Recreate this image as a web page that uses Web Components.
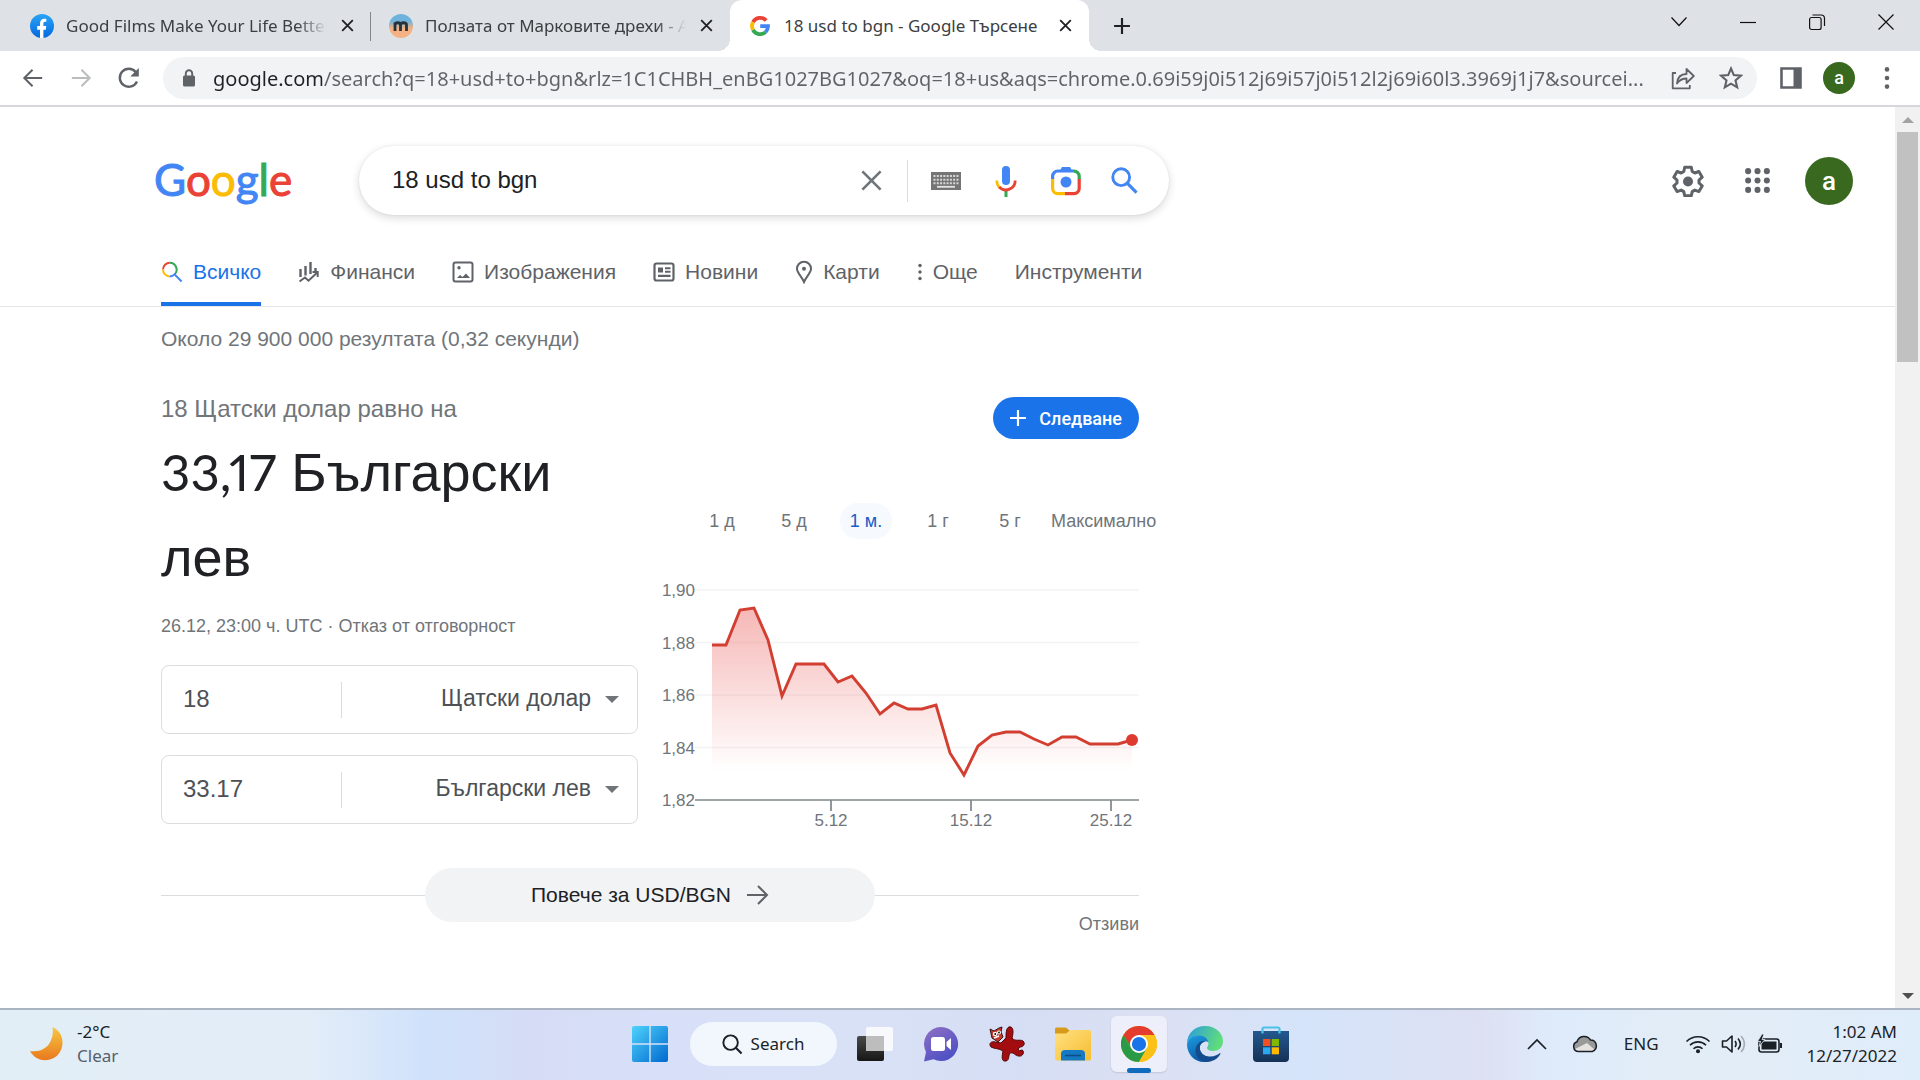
<!DOCTYPE html>
<html lang="bg">
<head>
<meta charset="utf-8">
<title>18 usd to bgn - Google Търсене</title>
<style>
  html, body { margin: 0; height: 100%; background: #fff; }
  body { font-family: "Liberation Sans", Arial, sans-serif; color: #202124; --ui: "Noto Sans", "Open Sans", sans-serif; overflow: hidden; }
</style>
</head>
<body>
<desktop-screen></desktop-screen>
<script>
const ICONS = {
  facebook: ['0 0 24 24', '<defs><linearGradient id="g" x2="0" y2="1"><stop stop-color="#2aa4f4"/><stop offset="1" stop-color="#0568e0"/></linearGradient></defs><circle cx="12" cy="12" r="12" fill="url(#g)"/><path d="M10 24v-8.300H7.200V12H10V9.500c0-3.100 1.700-4.700 4.300-4.700.9 0 2 .2 2 .2v2.700h-1.200c-1.300 0-1.700.8-1.700 1.700V12h2.900l-.5 3.700h-2.400V24z" fill="#fff"/>'],
  medic: ['0 0 24 24', '<defs><linearGradient id="g" x2="0" y2="1"><stop offset=".3" stop-color="#6fb3dc"/><stop offset=".6" stop-color="#f4b183"/></linearGradient></defs><circle cx="12" cy="12" r="12" fill="url(#g)"/><path d="M6 17V8.500M6 11c0-3 5.500-3 5.500 0v6M11.500 11c0-3 6-3 6 0v6" fill="none" stroke="#26333c" stroke-width="2.800"/>'],
  gmark: ['0 0 24 24', '<g fill="none" stroke-width="3.800"><path d="M18.200 6.600A8 8 0 0 0 5 8.200" stroke="#ea4335"/><path d="M5 8.200a8 8 0 0 0 0 7.600" stroke="#fbbc05"/><path d="M5 15.800a8 8 0 0 0 12.500 2.300" stroke="#34a853"/><path d="M17.500 18.100A8 8 0 0 0 20 12.200H12.200" stroke="#4285f4"/></g>'],
  close: ['0 0 24 24', '<path d="M4.500 4.500l15 15m0-15l-15 15" fill="none" stroke="currentColor" stroke-width="2.600"/>'],
  plus: ['0 0 24 24', '<path d="M12 2.500v19M2.500 12h19" fill="none" stroke="currentColor" stroke-width="2.600"/>'],
  winChevron: ['0 0 20 20', '<path d="M2.500 5.500l7.500 8 7.500-8" fill="none" stroke="currentColor" stroke-width="1.200"/>'],
  winMin: ['0 0 20 20', '<path d="M2 10.500h16" stroke="currentColor" stroke-width="1.200"/>'],
  winMax: ['0 0 20 20', '<g fill="none" stroke="currentColor" stroke-width="1.200"><rect x="2.600" y="5.500" width="11.500" height="12" rx="2"/><path d="M5.500 3h8.500a3.500 3.500 0 0 1 3.500 3.500V14"/></g>'],
  winClose: ['0 0 20 20', '<path d="M2.500 2.500l15 15m0-15l-15 15" fill="none" stroke="currentColor" stroke-width="1.200"/>'],
  back: ['0 0 24 24', '<path d="M22 12H3.500M11.500 3l-9 9 9 9" fill="none" stroke="currentColor" stroke-width="2.200"/>'],
  forward: ['0 0 24 24', '<path d="M2 12h18.500M12.500 3l9 9-9 9" fill="none" stroke="currentColor" stroke-width="2.200"/>'],
  reload: ['0 0 24 24', '<path d="M20 15.500A9 9 0 1 1 18.700 6" fill="none" stroke="currentColor" stroke-width="2.400"/><path d="M21.800 2v8.500h-8.500z" fill="currentColor"/>'],
  lock: ['0 0 16 20', '<rect x="2" y="7.500" width="12" height="11" rx="1.500" fill="currentColor"/><path d="M4.800 8V5.500a3.200 3.200 0 0 1 6.400 0V8" fill="none" stroke="currentColor" stroke-width="1.900"/>'],
  share: ['0 0 24 24', '<g fill="none" stroke="currentColor" stroke-width="1.800" stroke-linejoin="round"><path d="M5 7H1.700v15.300h17.100V19"/><path d="M6 17.500c.5-6 4-9.500 9.500-9.500V3l7.300 7-7.300 7v-4.500c-4.500 0-7 1.500-9.500 5z"/></g>'],
  star: ['0 0 24 24', '<path d="M12 2.500l2.800 6.600 7.200.6-5.500 4.700 1.700 7L12 17.700l-6.200 3.700 1.700-7L2 9.700l7.200-.6z" fill="none" stroke="currentColor" stroke-width="2.100"/>'],
  panel: ['0 0 24 24', '<path d="M2.500 2.500h19v19h-19z" fill="none" stroke="currentColor" stroke-width="2.600"/><path d="M14.500 2h7v20h-7z" fill="currentColor"/>'],
  dots: ['0 0 8 24', '<g fill="currentColor"><circle cx="4" cy="3.400" r="2.300"/><circle cx="4" cy="12" r="2.300"/><circle cx="4" cy="20.600" r="2.300"/></g>'],
  keyboard: ['0 0 30 20', '<rect y="1" width="30" height="18" fill="#757575"/><path d="M2.500 5h25M2.500 8.700h25M2.500 12.300h25" stroke="#d8d8d8" stroke-width="2" stroke-dasharray="2 1.280"/><path d="M6 15.800h18" stroke="#e4e4e4" stroke-width="1.800"/>'],
  mic: ['0 0 24 32', '<rect x="8" y="1" width="8" height="19" rx="4" fill="#4285f4"/><path d="M12 26v6" stroke="#34a853" stroke-width="3"/><path d="M2.800 15.500c0 3.500 1.500 6 3.400 7.300" fill="none" stroke="#fbbc04" stroke-width="2.800"/><path d="M5.200 22A9.300 9.300 0 0 0 21.200 15.500" fill="none" stroke="#ea4335" stroke-width="2.800"/>'],
  lens: ['0 0 32 32', '<g fill="none" stroke-width="3.200"><path d="M2.600 14.500v-3.300A5.200 5.200 0 0 1 7.800 6H24" stroke="#4285f4"/><path d="M24 6.100a5.200 5.200 0 0 1 5.200 5.200v3.200" stroke="#34a853"/><path d="M29.200 14v9.500a5.200 5.200 0 0 1-5.200 5.200h-9" stroke="#ea4335"/><path d="M2.600 14v9.500a5.200 5.200 0 0 0 5.200 5.200H15" stroke="#fbbc04"/></g><path d="M9.500 6.500L12 2h8l2.500 4.500z" fill="#4285f4"/><circle cx="16" cy="17" r="5.500" fill="#4285f4"/>'],
  find: ['0 0 26 26', '<circle cx="9.800" cy="9.800" r="8.100" fill="none" stroke="currentColor" stroke-width="2.800"/><path d="M15.800 15.800l8.800 8.800" stroke="currentColor" stroke-width="3"/>'],
  clear: ['0 0 24 24', '<path d="M2.500 2.500l19 19m0-19l-19 19" fill="none" stroke="currentColor" stroke-width="2.800"/>'],
  gear: ['0 0 32 32', '<path d="M12.700 2.200h6.600l.9 4.300 2.600 1.500 4.100-1.500 3.300 5.700-3.200 2.900v2.900l3.200 2.900-3.300 5.700-4.100-1.500-2.600 1.500-.9 4.200h-6.600l-.9-4.200-2.600-1.500-4.100 1.500-3.300-5.700L5 18v-2.900l-3.200-2.900 3.300-5.700L9.200 8l2.600-1.500z" fill="none" stroke="currentColor" stroke-width="3" stroke-linejoin="round"/><circle cx="16" cy="16.500" r="5" fill="currentColor"/>'],
  apps: ['0 0 24 24', '<g fill="currentColor">' + [3, 12, 21].map(y => [3, 12, 21].map(x => `<circle cx="${x}" cy="${y}" r="2.900"/>`).join('')).join('') + '</g>'],
  allSearch: ['0 0 22 22', '<g fill="none" stroke-width="2"><path d="M2 8.500A6.800 6.800 0 0 1 8.800 1.800" stroke="#ea4335"/><path d="M8.800 1.800a6.800 6.800 0 0 1 4.800 11.600" stroke="#34a853"/><path d="M8.800 15.400A6.800 6.800 0 0 1 2 8.500" stroke="#fbbc04"/><path d="M8.800 15.400a6.800 6.800 0 0 0 4.800-2l7 7.100" stroke="#4285f4"/></g>'],
  finance: ['0 0 22 22', '<g fill="none" stroke="currentColor"><path d="M2.500 8v8M7.500 5v9.500M12.500 1v12M17.500 7v3" stroke-width="2.400"/><path d="M1.500 20.500l5.500-4 3.500 3.200 8.500-8" stroke-width="2"/><path d="M14.500 11h5.200v5" stroke-width="2"/></g>'],
  image: ['0 0 22 22', '<rect x="1.500" y="1.500" width="19" height="19" rx="2" fill="none" stroke="currentColor" stroke-width="2"/><path d="M5 17l3-3 2.500 2 3.500-3.500 4 4.500z" fill="currentColor"/><circle cx="7" cy="6.800" r="1.700" fill="currentColor"/>'],
  news: ['0 0 22 22', '<rect x="1.500" y="2.500" width="19" height="17" rx="2" fill="none" stroke="currentColor" stroke-width="2.200"/><path d="M5 6.500h5v5H5zM12 6.300h5.500v2H12zM12 9.800h5.500v2H12zM5 13.700h12.500v2.200H5z" fill="currentColor"/>'],
  pin: ['0 0 18 24', '<path d="M9 1.700a7 7 0 0 1 7 7c0 4-4.500 7.500-7 13.300C6.500 16.200 2 12.700 2 8.700a7 7 0 0 1 7-7z" fill="none" stroke="currentColor" stroke-width="2"/><circle cx="9" cy="8.700" r="2" fill="currentColor"/>'],
  arrow: ['0 0 22 22', '<path d="M0 11h19.500M11 2l9 9-9 9" fill="none" stroke="currentColor" stroke-width="2"/>'],
  moon: ['0 0 36 36', '<defs><linearGradient id="g" x2="0" y2="1"><stop stop-color="#f6c942"/><stop offset="1" stop-color="#e9791e"/></linearGradient></defs><path d="M23.500 1C33 5 36 16 31.500 25 26 36.500 8 38 1 25c9 1 15-1.500 19-7 3.500-5 4.500-11 3.500-17z" fill="url(#g)"/>'],
  start: ['0 0 36 36', '<defs><linearGradient id="g" x2="1" y2="1"><stop stop-color="#4fd2fb"/><stop offset="1" stop-color="#0069cf"/></linearGradient></defs><path d="M2 0h15.300v17.300H0V2a2 2 0 0 1 2-2zM18.700 0H34a2 2 0 0 1 2 2v15.300H18.700zM0 18.700h17.300V36H2a2 2 0 0 1-2-2zM18.700 18.700H36V34a2 2 0 0 1-2 2H18.700z" fill="url(#g)"/>'],
  taskview: ['0 0 36 36', '<defs><linearGradient id="g" x2="0" y2="1"><stop stop-color="#4a4a4a"/><stop offset="1" stop-color="#161616"/></linearGradient></defs><rect y="10" width="27" height="25" rx="2" fill="url(#g)"/><rect x="9" y="1" width="27" height="24" rx="2" fill="#fdfdfd" opacity=".85"/><rect x="9" y="10" width="18" height="15" fill="#bdbdbd"/>'],
  chat: ['0 0 36 36', '<defs><linearGradient id="g" x2="0.600" y2="1"><stop stop-color="#9170c4"/><stop offset="1" stop-color="#4d50c4"/></linearGradient></defs><path d="M18 1a17 17 0 1 1-7.500 32.200L1 35.500l2-9.500A17 17 0 0 1 18 1z" fill="url(#g)"/><rect x="8" y="11" width="14" height="14" rx="2.500" fill="#fff"/><path d="M23.500 16l4.500-4v12l-4.500-4z" fill="#fff"/>'],
  irfan: ['0 0 36 36', '<path d="M17 12c0-4 0-10 3-11 4-1 5 4 3 11 3 4 8 1 11 3 3 3 0 6-3 6-2 1-2 3-1 4l3-1c3 1 1 7-3 6-4 0-5-4-9-3-2 2 0 7-4 8-5 1-4-5-3-10-4-3-9-2-12-4-3-4 1-6 4-5l6 1z" fill="#a40d10" stroke="#520507"/><path d="M3 12L1 3l4 2 5-3 3-1-1 5 2 5-5 5z" fill="#c23a2c" stroke="#3b1210"/><circle cx="6" cy="8" r="2.200" fill="#fff"/><circle cx="10" cy="6.500" r="2" fill="#fff"/><path d="M5 12l5-2" stroke="#fff" stroke-width="1.500"/><circle cx="6.200" cy="8" r=".9"/><circle cx="10" cy="6.500" r=".9"/>'],
  folder: ['0 0 36 36', '<defs><linearGradient id="g" x2="1" y2="1"><stop stop-color="#ffe183"/><stop offset="1" stop-color="#f7bd2f"/></linearGradient></defs><path d="M0 3a1.500 1.500 0 0 1 1.500-1.500H11L15 5l-3 4H0z" fill="#d79a1c"/><path d="M0 7.500h11L15.500 4H34a2 2 0 0 1 2 2v27a2 2 0 0 1-2 1.500H2A2 2 0 0 1 0 33z" fill="url(#g)"/><path d="M6 34.500V28a4 4 0 0 1 4-4h16a4 4 0 0 1 4 4v6.500z" fill="#1579c4"/><path d="M10 29.500h16" stroke="#0c4f86" stroke-width="1.600"/>'],
  chrome: ['0 0 48 48', '<circle cx="24" cy="24" r="24" fill="#fbc116"/><path d="M3.200 12A24 24 0 0 0 24 48l10.400-18L24 24 13.600 30z" fill="#2a9a47"/><path d="M24 12h20.800A24 24 0 0 1 24 48l10.400-18z" fill="#fbc116"/><path d="M3.200 12A24 24 0 0 1 44.800 12H24a12 12 0 0 0-11.600 9z" fill="#e33b2e"/><path d="M3.200 12l10.400 18V21z" fill="#2a9a47"/><path d="M3.200 12L24 12 13 26z" fill="#e33b2e"/><circle cx="24" cy="24" r="12" fill="#fff"/><circle cx="24" cy="24" r="9.500" fill="#1a73e8"/>'],
  edge: ['0 0 36 36', '<defs><linearGradient id="a" x2="1" y2=".3"><stop stop-color="#2b9be0"/><stop offset="1" stop-color="#5fdc7c"/></linearGradient><linearGradient id="b" x2=".4" y2="1"><stop stop-color="#1b9de2"/><stop offset="1" stop-color="#0c59a4"/></linearGradient></defs><path d="M0 18C0 7 8 0 18 0c11 0 18 7.500 18 15 0 7-5 10-10 10-4 0-6-1.500-6-3 0-1.500 1.500-2 1.500-4.500C21.500 13 17 10 12 10 6 10 1 13.500 0 18z" fill="url(#a)"/><path d="M0 18c1-5 6-8.500 12-8.500 5 0 9 3 9.500 7C19 14 14 15 13 20c-1.500 7 6 12 12 11-2 3-5 5-8 5C7 36 0 28 0 18z" fill="url(#b)"/><path d="M13 20c-1.500 6 4 11 10 10.500 5 0 8-2 10-3.500 1 0 .5 1-1 3-3 4-8 6-14 6-6-2-9.500-6-9.500-11 0-4 1.500-7 4.500-9 2-1.200 4.500-1.500 6-.5-3 .5-5.300 2-6 4.500z" fill="#124c8c"/>'],
  store: ['0 0 36 36', '<defs><linearGradient id="g" x2="0" y2="1"><stop stop-color="#23598f"/><stop offset="1" stop-color="#153155"/></linearGradient></defs><path d="M9.500 7V3a1.500 1.500 0 0 1 1.500-1.500h14A1.500 1.500 0 0 1 26.500 3v4" fill="none" stroke="#4cc2e8" stroke-width="2.200"/><path d="M0 5h36v27a4 4 0 0 1-4 4H4a4 4 0 0 1-4-4z" fill="url(#g)"/><path d="M10 13h7.300v7H10z" fill="#f25022"/><path d="M18.700 13H26v7h-7.300z" fill="#7fba00"/><path d="M10 21.300h7.300v7H10z" fill="#2aa9f0"/><path d="M18.700 21.300H26v7h-7.300z" fill="#ffb900"/><path d="M9.500 5v2.500M26.500 5v2.500" stroke="#4cc2e8" stroke-width="2.200"/>'],
  taskSearch: ['0 0 22 22', '<circle cx="9" cy="9" r="7.600" fill="none" stroke="currentColor" stroke-width="2"/><path d="M14.500 14.500l6 6" stroke="currentColor" stroke-width="2.200"/>'],
  up: ['0 0 20 12', '<path d="M1 11l9-9 9 9" fill="none" stroke="currentColor" stroke-width="1.700"/>'],
  cloud: ['0 0 26 20', '<path d="M6.500 17.500a5 5 0 0 1-1.500-9.700A7.500 7.500 0 0 1 18.500 6a5.900 5.900 0 0 1 1.800 11.500z" fill="#9a9a9a"/><path d="M3 15l12-6 8 7-3 1.500H6z" fill="#e5e2df"/><path d="M6.500 17.500a5 5 0 0 1-1.500-9.700A7.500 7.500 0 0 1 18.500 6a5.900 5.900 0 0 1 1.800 11.500z" fill="none" stroke="currentColor" stroke-width="1.500"/>'],
  wifi: ['0 0 26 20', '<g fill="none" stroke="currentColor" stroke-width="1.600"><path d="M1.500 7.500a16.200 16.200 0 0 1 23 0"/><path d="M5 11.200a11.300 11.300 0 0 1 16 0"/><path d="M8.500 14.700a6.400 6.400 0 0 1 9 0"/></g><circle cx="13" cy="17.300" r="2" fill="currentColor"/>'],
  speaker: ['0 0 26 20', '<g fill="none" stroke="currentColor" stroke-width="1.600"><path d="M1.500 7v6h4l5.500 5V2L5.500 7z" stroke-linejoin="round"/><path d="M14 7c1.500 2 1.500 4 0 6M17 4.500c3 3.500 3 7.500 0 11"/><path d="M20 2c4.500 4.500 4.500 11.500 0 16" opacity=".3"/></g>'],
  battery: ['0 0 26 20', '<rect x="2" y="5" width="20" height="13" rx="2.500" fill="none" stroke="currentColor" stroke-width="1.600"/><path d="M4.500 7.500h15v8h-15z" fill="currentColor"/><path d="M23 9h2v5h-2z" fill="currentColor"/><path d="M5 0L.5 7.500h3L2 12.500l6-7H5L7 0z" fill="currentColor" stroke="#e2ecf8" stroke-width=".8"/>']
};

/* Base class: renders the subclass' css and markup in an open shadow root. */
class Base extends HTMLElement {
  connectedCallback() {
    if (this.shadowRoot) return;
    const root = this.attachShadow({ mode: 'open' });
    const t = document.createElement('template');
    t.innerHTML = `<style>
      *, *::before, *::after { box-sizing: border-box; }
      button, input, select { font: inherit; color: inherit; border: 0; background: none; padding: 0; margin: 0; outline: 0; }
      button { display: inline-flex; align-items: center; justify-content: center; cursor: pointer; flex: none; }
      a { color: inherit; text-decoration: none; }
      ${this.css()}</style>${this.html()}`;
    root.append(t.content.cloneNode(true));
  }
  css() { return ':host{display:block}'; }
  html() { return '<slot></slot>'; }
}

class UiIcon extends Base {
  css() { return ':host{display:inline-flex;flex:none} svg{display:block}'; }
  html() {
    const [box, body] = ICONS[this.getAttribute('name')];
    const w = this.getAttribute('w'), h = this.getAttribute('h') || w;
    return `<svg width="${w}" height="${h}" viewBox="${box}" aria-hidden="true">${body}</svg>`;
  }
}
customElements.define('ui-icon', UiIcon);

class UserAvatar extends Base {
  css() { return `:host{display:inline-flex;flex:none}
    button{width:var(--size);height:var(--size);border-radius:50%;background:#38691e;color:#fff;font-family:Roboto,sans-serif;font-weight:500;font-size:var(--letter);line-height:1}`; }
  html() { return '<button aria-label="Профил"><slot></slot></button>'; }
}
customElements.define('user-avatar', UserAvatar);

class BrowserTab extends Base {
  css() { return `:host{display:flex;align-items:center;gap:12px;flex:0 1 359px;min-width:0;height:51px;padding:0 16px 0 18px;position:relative;font-size:17px;color:#3c4043}
    :host([divided])::after{content:"";position:absolute;right:0;top:12px;height:29px;width:1px;background:#80868b}
    :host([active]){background:#fff;border-radius:12px 12px 0 0}
    :host([active])::before,:host([active])::after{content:"";position:absolute;bottom:0;width:12px;height:12px}
    :host([active])::before{left:-12px;background:radial-gradient(circle at 0 0,transparent 12px,#fff 12px)}
    :host([active])::after{right:-12px;background:radial-gradient(circle at 100% 0,transparent 12px,#fff 12px)}
    .t{flex:1;min-width:0;overflow:hidden;white-space:nowrap;line-height:28px}
    :host([faded]) .t{-webkit-mask-image:linear-gradient(90deg,#000 calc(100% - 30px),transparent)}
    button{width:16px;height:24px;color:#202124}`; }
  html() { return `<ui-icon name="${this.getAttribute('icon')}" w="24"></ui-icon><span class="t"><slot></slot></span><button aria-label="Затваряне"><ui-icon name="close" w="17"></ui-icon></button>`; }
}
customElements.define('browser-tab', BrowserTab);

class TabStrip extends Base {
  css() { return `:host{display:flex;background:#dee1e6;height:51px;padding-left:12px;font-family:var(--ui)}
    .new{width:36px;margin-left:15px;color:#202124}
    .win{margin-left:auto;display:flex;height:44px;color:#111}
    .win button{width:69px}`; }
  html() { return `<browser-tab icon="facebook" divided faded>Good Films Make Your Life Better</browser-tab>
    <browser-tab icon="medic" faded>Ползата от Марковите дрехи - А</browser-tab>
    <browser-tab icon="gmark" active>18 usd to bgn - Google Търсене</browser-tab>
    <button class="new" aria-label="Нов раздел"><ui-icon name="plus" w="20"></ui-icon></button>
    <div class="win"><button aria-label="Търсене в разделите"><ui-icon name="winChevron" w="20"></ui-icon></button><button aria-label="Минимизиране"><ui-icon name="winMin" w="20"></ui-icon></button><button aria-label="Възстановяване"><ui-icon name="winMax" w="20"></ui-icon></button><button aria-label="Затваряне"><ui-icon name="winClose" w="20"></ui-icon></button></div>`; }
}
customElements.define('tab-strip', TabStrip);

class AddressBar extends Base {
  css() { return `:host{display:flex;align-items:center;height:56px;padding:0 21px 0 9px;border-bottom:2px solid #d5d7da;color:#5f6368;font-family:var(--ui)}
    .nav{width:48px;height:42px}
    .nav[disabled]{color:#babcbe}
    .box{flex:1;min-width:0;display:flex;align-items:center;height:42px;margin:0 0 0 10px;padding:0 8px 0 18px;border-radius:21px;background:#f1f3f4}
    input{flex:1;min-width:0;margin:0 8px 0 16px;font-size:20px;height:32px;color:transparent;background:linear-gradient(90deg,#202124 0 109px,#5f6368 109px);-webkit-background-clip:text;background-clip:text;text-overflow:clip}
    .box button{width:36px;height:36px}
    .box button + button{margin-left:12px}
    .panel{width:36px;height:36px;margin:0 14px 0 16px}
    user-avatar{--size:32px;--letter:18px}
    .more{width:24px;height:36px;margin-left:20px}`; }
  html() { return `<button class="nav" aria-label="Назад"><ui-icon name="back" w="22"></ui-icon></button><button class="nav" disabled aria-label="Напред"><ui-icon name="forward" w="22"></ui-icon></button><button class="nav" aria-label="Презареждане"><ui-icon name="reload" w="24"></ui-icon></button>
    <div class="box"><ui-icon name="lock" w="16" h="20"></ui-icon><input type="text" aria-label="Адрес" spellcheck="false" value="google.com/search?q=18+usd+to+bgn&amp;rlz=1C1CHBH_enBG1027BG1027&amp;oq=18+us&amp;aqs=chrome.0.69i59j0i512j69i57j0i512l2j69i60l3.3969j1j7&amp;sourcei..."><button aria-label="Споделяне"><ui-icon name="share" w="24"></ui-icon></button><button aria-label="Отметка"><ui-icon name="star" w="24"></ui-icon></button></div>
    <button class="panel" aria-label="Страничен панел"><ui-icon name="panel" w="24"></ui-icon></button><user-avatar>a</user-avatar><button class="more" aria-label="Още"><ui-icon name="dots" w="8" h="24"></ui-icon></button>`; }
}
customElements.define('address-bar', AddressBar);

class SearchHeader extends Base {
  css() { return `:host{display:flex;align-items:center;padding:39px 42px 0 154px}
    .logo{font:400 44px/64px Lato,sans-serif;padding-bottom:4px;width:205px;flex:none;color:#4285f4;-webkit-text-stroke:1px currentColor}
    .r{color:#ea4335}.y{color:#fbbc05}.g{color:#34a853}
    form{flex:0 1 810px;display:flex;align-items:center;height:69px;border-radius:35px;padding:0 17px 0 33px;background:#fff;box-shadow:0 3px 8px 0 rgba(32,33,36,.16),0 0 2px rgba(32,33,36,.1)}
    input{flex:1;min-width:0;font-size:24px;height:40px;padding-bottom:2px}
    form button{height:42px}
    .x{width:48px;color:#70757a}
    .bar{width:1px;height:42px;background:#dadce0;margin:0 8px 0 12px}
    .k{width:60px}.f{width:56px;color:#4285f4}
    .side{margin-left:auto;display:flex;align-items:center;gap:30px;color:#5f6368}
    .side button{height:42px}.gear{width:42px}.apps{width:36px}
    user-avatar{--size:48px;--letter:26px}`; }
  html() { return `<a class="logo" href="#" aria-label="Google">G<span class="r">o</span><span class="y">o</span>g<span class="g">l</span><span class="r">e</span></a>
    <form role="search"><input type="text" aria-label="Търсене" value="18 usd to bgn"><button type="button" class="x" aria-label="Изчистване"><ui-icon name="clear" w="23"></ui-icon></button><span class="bar"></span><button type="button" class="k" aria-label="Клавиатура"><ui-icon name="keyboard" w="30" h="20"></ui-icon></button><button type="button" class="k" aria-label="Гласово търсене"><ui-icon name="mic" w="24" h="32"></ui-icon></button><button type="button" class="k" aria-label="Търсене по изображение"><ui-icon name="lens" w="32"></ui-icon></button><button type="button" class="f" aria-label="Търсене"><ui-icon name="find" w="27"></ui-icon></button></form>
    <div class="side"><button class="gear" aria-label="Настройки"><ui-icon name="gear" w="32"></ui-icon></button><button class="apps" aria-label="Приложения"><ui-icon name="apps" w="25"></ui-icon></button><user-avatar>a</user-avatar></div>`; }
}
customElements.define('search-header', SearchHeader);

class NavLink extends Base {
  css() { return `:host{display:block;flex:none}
    a{display:flex;align-items:center;gap:10px;height:68px;padding-top:4px;border-bottom:4px solid transparent;font-size:21px;color:#5f6368;white-space:nowrap}
    :host([active]) a{color:#1a73e8;border-color:#1a73e8}`; }
  html() {
    const i = this.getAttribute('icon');
    return `<a href="#">${i ? `<ui-icon name="${i}" w="${this.getAttribute('w') || 22}" h="${this.getAttribute('h') || 22}"></ui-icon>` : ''}<slot></slot></a>`;
  }
}
customElements.define('nav-link', NavLink);

class SearchNav extends Base {
  css() { return ':host{display:flex;gap:37px;margin-top:23px;padding-left:161px;border-bottom:1px solid #e4e6e9}'; }
  html() { return `<nav-link icon="allSearch" active>Всичко</nav-link><nav-link icon="finance">Финанси</nav-link><nav-link icon="image">Изображения</nav-link><nav-link icon="news">Новини</nav-link><nav-link icon="pin" w="18" h="24">Карти</nav-link><nav-link icon="dots" w="6" h="18">Още</nav-link><nav-link>Инструменти</nav-link>`; }
}
customElements.define('search-nav', SearchNav);

class CurrencyField extends Base {
  css() { return `:host{display:flex;align-items:center;height:69px;border:1px solid #dadce0;border-radius:8px;color:#4d5156;position:relative}
    input{width:180px;padding:0 21px 2px;height:36px;font-size:24px;border-right:1px solid #dadce0}
    select{flex:1;min-width:0;height:40px;font-size:23px;appearance:none;padding:0 46px 4px 0;text-align-last:right}
    i{position:absolute;right:18px;top:30px;border:7px solid transparent;border-top-color:#70757a;border-bottom:0;pointer-events:none}`; }
  html() { return `<input type="text" aria-label="Сума" value="${this.getAttribute('value')}"><select aria-label="Валута"><option>${this.getAttribute('currency')}</option></select><i></i>`; }
}
customElements.define('currency-field', CurrencyField);

class RateChart extends Base {
  css() { return ':host{display:block} svg{display:block;width:100%;height:auto;overflow:visible} text{font-size:17px;fill:#70757a}'; }
  html() {
    /* Plot area: 14 units per day, 52.5 units per 0,02 BGN. */
    const pts = [[51,75],[65,75],[79,40],[93,38],[107,70],[121,126],[135,94],[163,94],[177,112],[191,106],[205,123],[219,144],[233,133],[247,139],[261,139],[275,135],[289,183],[303,205],[317,176],[331,165],[345,162],[359,162],[373,169],[387,175],[401,167],[415,167],[429,174],[457,174],[471,170]];
    const line = pts.map(p => p.join(',')).join(' ');
    return `<svg viewBox="0 0 478 270" role="img" aria-label="USD/BGN"><defs><linearGradient id="f" x2="0" y2="1"><stop stop-color="#e53935" stop-opacity=".36"/><stop offset=".92" stop-color="#e53935" stop-opacity="0"/></linearGradient></defs>
      ${[20, 72.5, 125, 177.5].map(y => `<path d="M34 ${y}H478" stroke="#f3f3f3" stroke-width="1.500"/>`).join('')}
      <polygon points="51,215 ${line} 471,215" fill="url(#f)"/>
      <polyline points="${line}" fill="none" stroke="#d23f31" stroke-width="2.900"/>
      <circle cx="471" cy="170" r="6" fill="#dd3a30"/>
      <path d="M34 230H478M170 230v11M310 230v11M450 230v11" stroke="#80868b" stroke-width="1.700"/>
      ${['1,90', '1,88', '1,86', '1,84', '1,82'].map((t, i) => `<text x="34" y="${26 + i * 52.5}" text-anchor="end">${t}</text>`).join('')}
      ${['5.12', '15.12', '25.12'].map((t, i) => `<text x="${170 + i * 140}" y="256" text-anchor="middle">${t}</text>`).join('')}</svg>`;
  }
}
customElements.define('rate-chart', RateChart);

class RangeTabs extends Base {
  css() { return `:host{display:flex;font-size:18px;color:#70757a}
    button{width:72px;height:36px;white-space:nowrap}
    span{display:inline-flex;align-items:center;height:36px;padding:0 10px;border-radius:18px}
    .on span{background:#f6f9fd;color:#1a5dc9}
    button:last-child{width:auto;padding-left:5px}button:last-child span{padding:0}`; }
  html() { return ['1 д', '5 д', '1 м.', '1 г', '5 г', 'Максимално'].map(t => `<button${t === '1 м.' ? ' class="on"' : ''}><span>${t}</span></button>`).join(''); }
}
customElements.define('range-tabs', RangeTabs);

class CurrencyCard extends Base {
  css() { return `:host{display:block;max-width:978px;padding-top:20px}
    .grid{display:grid;grid-template-columns:minmax(0,477px) minmax(0,478px);justify-content:space-between}
    .sub{font-size:24px;line-height:36px;color:#70757a}
    h2{font-size:54px;font-weight:400;line-height:85px;margin:3px 0 12px;color:#202124}
    h2 .n{font-family:Lato,sans-serif;font-size:51px;line-height:1;font-feature-settings:"pnum"}
    .meta{font-size:18px;line-height:28px;color:#70757a;margin-bottom:25px}
    currency-field + currency-field{margin-top:21px}
    .right{display:flex;flex-direction:column}
    .follow{align-self:flex-end;height:42px;margin-top:6px;padding:0 17px 0 15px;gap:11px;border-radius:21px;background:#1a73e8;color:#fff;font:500 18px Roboto,sans-serif}
    range-tabs{margin:64px 0 31px 25px}
    .more{display:flex;align-items:center;margin-top:28px}
    .more::before,.more::after{content:"";flex:1;height:1px;background:#dadce0}
    .more a{display:flex;align-items:center;justify-content:center;gap:16px;width:450px;height:54px;border-radius:27px;background:#f1f3f4;font-size:21px;color:#202124}
    .more ui-icon{color:#5f6368}
    .fb{display:block;text-align:right;font-size:18px;line-height:24px;margin-top:-10px;color:#70757a}`; }
  html() { return `<div class="grid"><div><div class="sub">18 Щатски долар равно на</div><h2><span class="n">33,17</span> <span>Български</span> <span>лев</span></h2><div class="meta">26.12, 23:00 ч. UTC · <a href="#">Отказ от отговорност</a></div>
    <currency-field value="18" currency="Щатски долар"></currency-field><currency-field value="33.17" currency="Български лев"></currency-field></div>
    <div class="right"><button class="follow"><ui-icon name="plus" w="20"></ui-icon>Следване</button><range-tabs></range-tabs><rate-chart></rate-chart></div></div>
    <div class="more"><a href="#">Повече за USD/BGN<ui-icon name="arrow" w="22"></ui-icon></a></div><a class="fb" href="#">Отзиви</a>`; }
}
customElements.define('currency-card', CurrencyCard);

class SearchPage extends Base {
  css() { return `:host{display:flex;min-height:0}
    main{flex:1;min-width:0;overflow:hidden}
    .stats{padding-left:161px;font-size:21px;line-height:64px;color:#70757a}
    currency-card{margin-left:161px}
    .scroll{width:25px;flex:none;background:#f1f1f1;display:flex;flex-direction:column;align-items:center;padding:10px 0 9px}
    .scroll i{border:6px solid transparent}
    .u{border-top:0!important;border-bottom:6px solid #a3a3a3!important}
    .d{border-bottom:0!important;border-top:6px solid #505050!important;margin-top:auto}
    .thumb{width:21px;height:230px;margin-top:9px;background:#c1c1c1}`; }
  html() { return `<main><search-header></search-header><search-nav></search-nav><div class="stats">Около 29 900 000 резултата (0,32 секунди)</div><currency-card></currency-card></main>
    <div class="scroll"><i class="u"></i><div class="thumb"></div><i class="d"></i></div>`; }
}
customElements.define('search-page', SearchPage);

class TaskItem extends Base {
  css() { return `:host{display:block;flex:none}
    button{position:relative;width:56px;height:56px;border-radius:6px}
    :host([active]) button{background:#edf0fa;box-shadow:0 1px 2px rgba(0,0,0,.12)}
    :host([active]) button::after{content:"";position:absolute;bottom:-1px;left:16px;width:24px;height:5px;border-radius:3px;background:#0f6cbd}`; }
  html() { return `<button aria-label="${this.getAttribute('label')}"><ui-icon name="${this.getAttribute('icon')}" w="36"></ui-icon></button>`; }
}
customElements.define('task-item', TaskItem);

class TaskBar extends Base {
  css() { return `:host{display:grid;grid-template-columns:1fr auto 1fr;align-items:center;height:72px;padding-bottom:2px;border-top:2px solid #abb5c1;font-family:var(--ui);font-size:17px;line-height:24px;color:#1b1f26;box-sizing:border-box;
      background:linear-gradient(90deg,#e2eef6 0,#e3edf8 16%,#d0e2fb 22%,#d6dcf5 28%,#d7e0f8 34%,#d9e1f6 46%,#d5def4 53%,#dce0f3 60%,#d5e4fa 68%,#dde0f2 77%,#deebfb 81%,#e3edf6 88%,#dfecfa 100%)}
    .weather{display:flex;align-items:center;gap:12px;padding-left:29px}
    .weather small{display:block;font-size:17px;color:#56606c}
    .apps{display:flex;align-items:center;gap:10px}
    .search{width:147px;height:44px;border-radius:22px;background:#f2f6fd;gap:8px;font-size:17px;margin:0 0 0 2px}
    .tray{display:flex;justify-content:flex-end;align-items:center;padding-right:23px}
    .up{margin-right:25px}
    .clock{text-align:right;margin-left:24px}
    .lang{margin:0 26px}
    .sys{gap:10px}`; }
  html() { return `<div class="weather"><ui-icon name="moon" w="36"></ui-icon><div>-2°C<small>Clear</small></div></div>
    <div class="apps"><task-item icon="start" label="Start"></task-item><button class="search"><ui-icon name="taskSearch" w="21"></ui-icon>Search</button><task-item icon="taskview" label="Task view"></task-item><task-item icon="chat" label="Chat"></task-item><task-item icon="irfan" label="IrfanView"></task-item><task-item icon="folder" label="File Explorer"></task-item><task-item icon="chrome" label="Google Chrome" active></task-item><task-item icon="edge" label="Edge"></task-item><task-item icon="store" label="Store"></task-item></div>
    <div class="tray"><button class="up" aria-label="Hidden icons"><ui-icon name="up" w="20" h="12"></ui-icon></button><ui-icon name="cloud" w="26" h="20"></ui-icon><span class="lang">ENG</span><button class="sys" aria-label="Network, volume, battery"><ui-icon name="wifi" w="26" h="20"></ui-icon><ui-icon name="speaker" w="26" h="20"></ui-icon><ui-icon name="battery" w="26" h="20"></ui-icon></button><div class="clock">1:02 AM<br>12/27/2022</div></div>`; }
}
customElements.define('task-bar', TaskBar);

class DesktopScreen extends Base {
  css() { return ':host{display:flex;flex-direction:column;height:100vh;background:#fff} search-page{flex:1}'; }
  html() { return '<tab-strip></tab-strip><address-bar></address-bar><search-page></search-page><task-bar></task-bar>'; }
}
customElements.define('desktop-screen', DesktopScreen);
</script>
</body>
</html>
